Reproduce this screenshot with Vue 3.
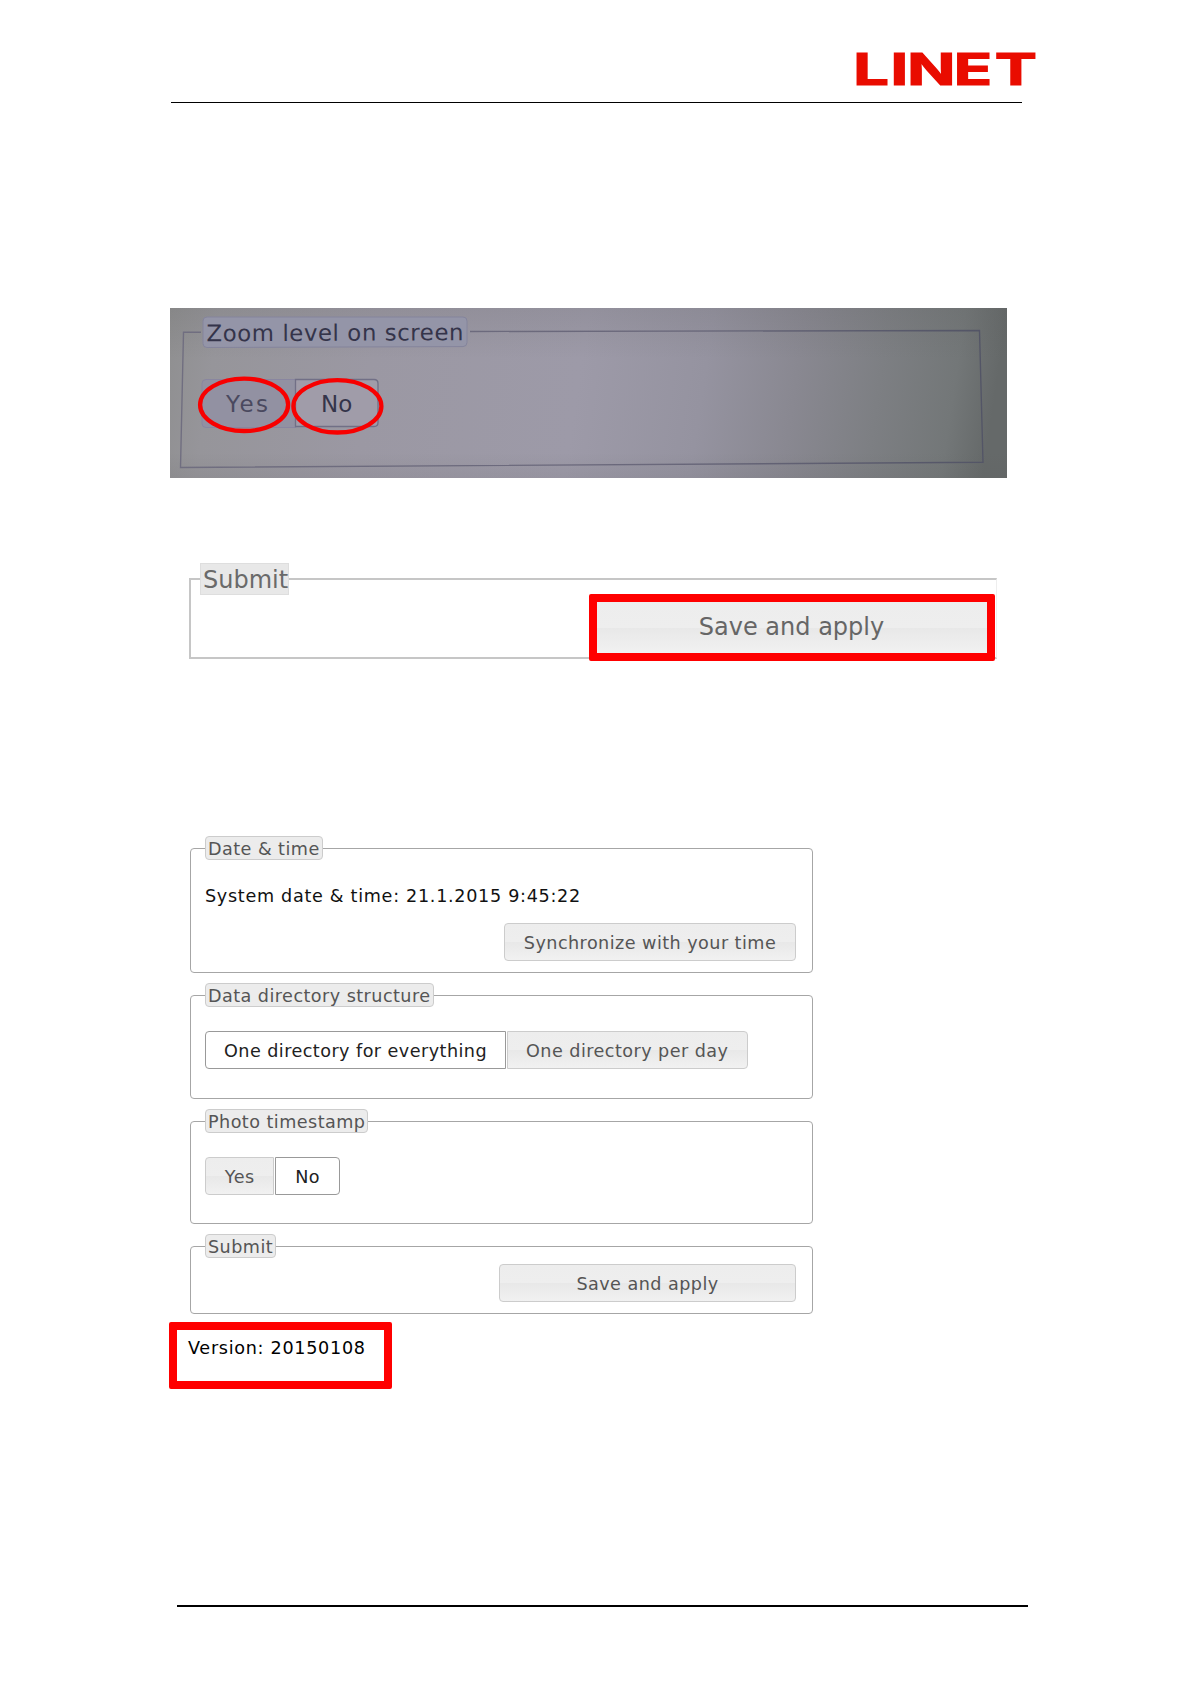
<template>
    <div class="page">
        <header class="page-header">
            <svg class="logo" width="182" height="36" viewBox="0 0 182 36">
                <text transform="scale(1.42 1)" y="33.3" :x="logoX">LINET</text>
            </svg>
        </header>

        <!-- photo of the device display, frame is slightly tilted -->
        <svg class="photo" width="837" height="170" viewBox="0 0 837 170">
            <defs>
                <linearGradient id="screen" x1="0" y1="0" x2="1" y2="0.03">
                    <stop offset="0" stop-color="#8f8f90" />
                    <stop offset="0.06" stop-color="#96959a" />
                    <stop offset="0.25" stop-color="#9b98a3" />
                    <stop offset="0.5" stop-color="#9d9aa8" />
                    <stop offset="0.65" stop-color="#9593a0" />
                    <stop offset="0.76" stop-color="#898891" />
                    <stop offset="0.86" stop-color="#7d7f83" />
                    <stop offset="0.95" stop-color="#737778" />
                    <stop offset="1" stop-color="#656969" />
                </linearGradient>
                <linearGradient id="shade" x1="0" y1="0" x2="0" y2="1">
                    <stop offset="0" stop-color="#555" stop-opacity="0.14" />
                    <stop offset="0.3" stop-color="#555" stop-opacity="0" />
                    <stop offset="0.85" stop-color="#555" stop-opacity="0" />
                    <stop offset="1" stop-color="#555" stop-opacity="0.1" />
                </linearGradient>
                <linearGradient id="line" x1="0" y1="0" x2="1" y2="0">
                    <stop offset="0" stop-color="#706e80" />
                    <stop offset="0.6" stop-color="#6a687b" />
                    <stop offset="1" stop-color="#535566" />
                </linearGradient>
            </defs>
            <rect width="837" height="170" fill="url(#screen)" />
            <rect width="837" height="170" fill="url(#shade)" />
            <path class="frame" d="M31 24.3H13.5L10.5 159.5L813 154.3L809.5 22.5L300 23.5" />
            <path class="photo-legend" d="M37 9H293Q297 9 297 13V34.5Q297 38.5 293 38.6L37 39.5Q33 39.5 33 35.5V13Q33 9 37 9Z" />
            <text class="photo-text title" x="36.5" y="33.3" textLength="257" transform="rotate(-0.25 37 33)">Zoom level on screen</text>
            <path class="photo-off" d="M36 71.5H126V119.5H36Q32 119.5 32 115.5V75.5Q32 71.5 36 71.5Z" />
            <path class="photo-on" d="M125.5 71.5H204Q208 71.5 208 75.5V114.5Q208 118.5 204 118.5H125.5Z" />
            <text class="photo-text muted" x="56" y="104.4" textLength="42">Yes</text>
            <text class="photo-text" x="151" y="103.5">No</text>
            <ellipse class="mark" cx="74.1" cy="96.8" rx="44" ry="26.2" />
            <ellipse class="mark" cx="167.4" cy="98.3" rx="44" ry="26.2" />
        </svg>

        <fieldset class="big-set">
            <legend>Submit</legend>
            <button class="big-btn">Save and apply</button>
        </fieldset>

        <form class="settings" @submit.prevent>
            <fieldset class="set date-set">
                <legend>Date &amp; time</legend>
                <p class="system-time">System date &amp; time: {{ systemTime }}</p>
                <button class="btn sync-btn">Synchronize with your time</button>
            </fieldset>

            <fieldset v-for="item in options" :key="item.title" class="set option-set">
                <legend>{{ item.title }}</legend>
                <div class="btn-group">
                    <button
                        v-for="name in item.values"
                        :key="name"
                        class="btn"
                        :class="{ active: item.selected === name }"
                        @click="item.selected = name"
                    >{{ name }}</button>
                </div>
            </fieldset>

            <fieldset class="set submit-set">
                <legend>Submit</legend>
                <button class="btn save-btn">Save and apply</button>
            </fieldset>
        </form>

        <div class="version">Version: {{ version }}</div>

        <footer class="page-footer"></footer>
    </div>
</template>

<script setup>
import { ref } from 'vue';

const systemTime = ref('21.1.2015 9:45:22');
const version = '20150108';

const options = ref([
    { title: 'Data directory structure', values: ['One directory for everything', 'One directory per day'], selected: 'One directory for everything' },
    { title: 'Photo timestamp', values: ['Yes', 'No'], selected: 'No' },
]);

// start of every letter of the logo, before the horizontal stretch
const logoX = '-2.6 23.6 35.4 68.2 97';
</script>

<style>
body {
    margin: 0;
    background: #fff;
}
</style>

<style scoped>
.page {
    width: 1191px;
    height: 1684px;
    box-sizing: border-box;
    padding: 50px 163px 0 169px;
    display: flex;
    flex-direction: column;
    align-items: flex-start;
    overflow: hidden;
    font-family: "DejaVu Sans", Verdana, sans-serif;
    font-size: 17.6px;
    letter-spacing: 0.45px;
    color: #111;
}

.page-header {
    width: 851px;
    height: 53px;
    margin-left: 2px;
    box-sizing: border-box;
    border-bottom: 1px solid #000;
    flex: none;
}

.logo {
    display: block;
    margin: 2px 0 0 686px;
    overflow: visible;
}

.logo text {
    font-family: Inter, sans-serif;
    font-size: 44.5px;
    font-weight: 700;
    letter-spacing: 0;
    fill: #e90c00;
    stroke: #e90c00;
    stroke-width: 1.2px;
}

.photo {
    display: block;
    flex: none;
    margin: 205px 0 0 1px;
}

.frame {
    fill: none;
    stroke: url(#line);
    stroke-width: 1.4;
}

.photo-legend {
    fill: #9495a8;
    stroke: #84849c;
}

.photo-off {
    fill: #9291a2;
    stroke: #8986a0;
}

.photo-on {
    fill: #a09ca9;
    stroke: #716f86;
    stroke-width: 1.3;
}

.photo-text {
    font-size: 23px;
    letter-spacing: 0;
    fill: #34344a;
}

.photo-text.title {
    font-size: 22.8px;
}

.photo-text.muted {
    fill: #4a495f;
}

.mark {
    fill: none;
    stroke: #f80000;
    stroke-width: 4.3;
}

fieldset {
    box-sizing: border-box;
    margin: 0;
    min-width: 0;
    flex: none;
}

legend {
    box-sizing: border-box;
    color: #555;
    white-space: nowrap;
}

button {
    box-sizing: border-box;
    font-family: inherit;
    font-size: inherit;
    letter-spacing: inherit;
    color: #555;
    background: linear-gradient(#ededed 0%, #eee 50%, #e8e8e8 51%, #f1f1f1 100%);
}

.big-set {
    width: 808px;
    height: 96px;
    margin: 85px 0 0 20px;
    padding: 0 1px 0 9px;
    border: 2px solid #c6c6c6;
    border-right: 1px solid #eee;
    display: flex;
    justify-content: flex-end;
    font-size: 24px;
    letter-spacing: 0;
}

.big-set legend {
    height: 32px;
    padding: 1px 0 0 2px;
    line-height: 31px;
    background: #e8e8e8;
    border: 1px solid #dedede;
    color: #6a6a6a;
}

.big-btn {
    flex: none;
    width: 406px;
    height: 67px;
    margin-top: -1px;
    padding: 0 1px 1px 0;
    border: 8px solid #f00;
    border-radius: 2px;
    color: #666;
}

.settings {
    display: flex;
    flex-direction: column;
    gap: 10px;
    margin: 177px 0 0 21px;
}

.set {
    width: 623px;
    padding: 0 16px 0 14px;
    border: 1px solid #a6a6a6;
    border-radius: 4px;
}

.set legend {
    height: 24px;
    padding: 1px 2px 0;
    line-height: 23px;
    border: 1px solid #ccc;
    border-radius: 4px;
    background: #ececec;
}

.date-set {
    height: 137px;
}

.option-set {
    height: 116px;
}

.option-set + .option-set {
    height: 115px;
}

.submit-set {
    height: 80px;
}

.system-time {
    margin: 24px 0 15px;
    line-height: 24px;
    letter-spacing: 0.7px;
}

.btn {
    display: block;
    height: 38px;
    padding: 2px 18px 0;
    border: 1px solid #ccc;
    border-radius: 4px;
    white-space: nowrap;
}

.sync-btn {
    width: 292px;
    margin-left: auto;
    padding: 2px 0 0;
}

.save-btn {
    width: 297px;
    margin: 6px 0 0 auto;
}

.btn-group {
    display: flex;
    gap: 1px;
    margin-top: 24px;
}

.btn-group .btn:first-child {
    border-radius: 4px 0 0 4px;
}

.btn-group .btn:last-child {
    padding-right: 19px;
    border-radius: 0 4px 4px 0;
}

.option-set + .option-set .btn {
    padding: 2px 18.8px 0;
}

.btn.active {
    background: #fff;
    border-color: #999;
    color: #212121;
}

.version {
    box-sizing: border-box;
    width: 223px;
    height: 67px;
    margin-top: 8px;
    padding: 6px 0 0 11px;
    border: 8px solid #f00;
    border-radius: 2px;
    line-height: 24px;
    letter-spacing: 0.7px;
    color: #000;
    flex: none;
}

.page-footer {
    width: 851px;
    margin: 216px 0 0 8px;
    border-top: 2px solid #000;
}
</style>
